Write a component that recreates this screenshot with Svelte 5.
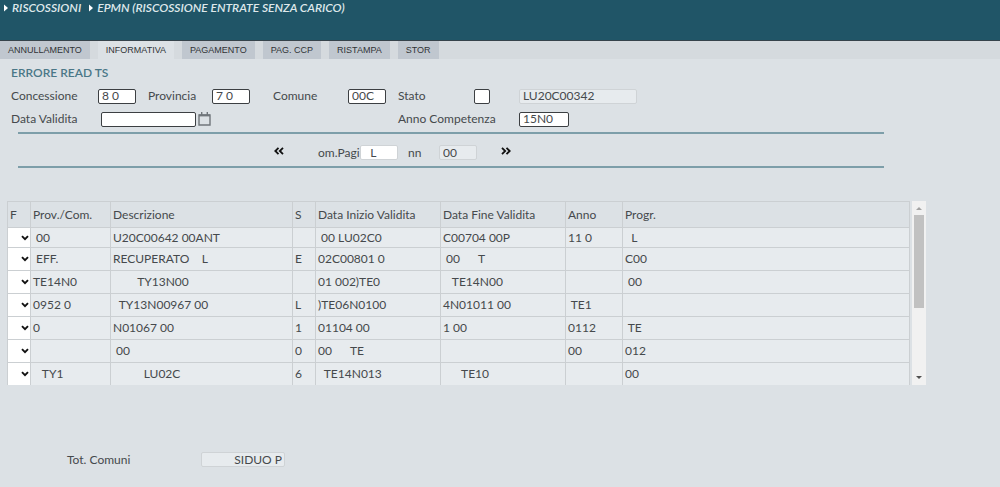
<script>
  const tabs = ['ANNULLAMENTO', 'INFORMATIVA', 'PAGAMENTO', 'PAG. CCP', 'RISTAMPA', 'STOR'];
  let active = $state('INFORMATIVA');

  const columns = ['F', 'Prov./Com.', 'Descrizione', 'S', 'Data Inizio Validita', 'Data Fine Validita', 'Anno', 'Progr.'];
  const rows = [
    [' 00', 'U20C00642 00ANT', '', ' 00 LU02C0', 'C00704 00P', '11 0', '  L'],
    [' EFF.', 'RECUPERATO    L', 'E', '02C00801 0', ' 00      T', '', 'C00'],
    ['TE14N0', '        TY13N00', '', '01 002)TE0', '   TE14N00', '', ' 00'],
    ['0952 0', '  TY13N00967 00', 'L', ')TE06N0100', '4N01011 00', ' TE1', ''],
    ['0', 'N01067 00', '1', '01104 00', '1 00', '0112', ' TE'],
    ['', ' 00', '0', '00      TE', '', '00', '012'],
    ['   TY1', '          LU02C', '6', '  TE14N013', '      TE10', '', '00']
  ];
</script>

<header>
  <nav aria-label="Percorso">
    <a href="#riscossioni"><svg width="4" height="8" viewBox="0 0 4 8"><path d="M0 0.5L4 4L0 7.5Z" /></svg>RISCOSSIONI</a>
    <a href="#epmn"><svg width="4" height="8" viewBox="0 0 4 8"><path d="M0 0.5L4 4L0 7.5Z" /></svg>EPMN (RISCOSSIONE ENTRATE SENZA CARICO)</a>
  </nav>
</header>

<div class="tabs" role="tablist">
  {#each tabs as tab}
    <button role="tab" class:active={tab === active} aria-selected={tab === active} onclick={() => (active = tab)}>{tab}</button>
  {/each}
</div>

<main>
  <h1>ERRORE READ TS</h1>

  <form class="filters">
    <label for="conc">Concessione</label>
    <input id="conc" class="w38" value="8 0" />
    <label for="prov">Provincia</label>
    <input id="prov" class="w38" value="7 0" />
    <label for="com">Comune</label>
    <input id="com" class="w38" value="00C" />
    <label for="stato">Stato</label>
    <input id="stato" class="w16" value="" />
    <input class="w118" aria-label="Descrizione stato" value="LU20C00342" readonly />

    <label for="data">Data Validita</label>
    <div class="date">
      <input id="data" value="" />
      <button type="button" aria-label="Calendario">
        <svg width="13" height="14" viewBox="0 0 13 14"><path d="M1 3H12V13H1Z" fill="none" stroke="#70767b" stroke-width="1.4" /><path d="M1 3.4H12" stroke="#70767b" stroke-width="2" /><path d="M3.7 0V3M9.3 0V3" stroke="#70767b" stroke-width="1.4" /></svg>
      </button>
    </div>
    <label class="anno" for="anno">Anno Competenza</label>
    <input id="anno" class="w50" value="15N0" />
  </form>

  <section class="pager" aria-label="Pagine">
    <button class="prev" aria-label="Precedente"><svg width="10" height="8" viewBox="0 0 10 8"><path d="M4.5 0.8L1.3 4L4.5 7.2M9 0.8L5.8 4L9 7.2" /></svg></button>
    <label for="pag">om.Pagi</label>
    <input id="pag" class="w38 soft" value="  L" />
    <label class="nn" for="tot">nn</label>
    <input id="tot" class="w38" value="00" readonly />
    <button class="next" aria-label="Successiva"><svg width="10" height="8" viewBox="0 0 10 8"><path d="M1 0.8L4.2 4L1 7.2M5.5 0.8L8.7 4L5.5 7.2" /></svg></button>
  </section>

  <div class="grid">
    <table>
      <colgroup>
        <col class="c1" /><col class="c2" /><col class="c3" /><col class="c4" /><col class="c5" /><col class="c5" /><col class="c7" /><col />
      </colgroup>
      <thead>
        <tr>{#each columns as name}<th>{name}</th>{/each}</tr>
      </thead>
      <tbody>
        {#each rows as row, i}
          <tr>
            <td class="pick">
              <div>
                <select aria-label={'F riga ' + (i + 1)}><option></option></select>
                <svg width="8" height="6" viewBox="0 0 8 6"><path d="M1 1.2L4 4.2L7 1.2" /></svg>
              </div>
            </td>
            {#each row as cell}<td>{cell}</td>{/each}
          </tr>
        {/each}
      </tbody>
    </table>
    <div class="scroll" aria-hidden="true">
      <svg width="6" height="3" viewBox="0 0 6 3"><path d="M0 3L3 0L6 3Z" fill="#a3a3a3" /></svg>
      <div class="track"><div class="thumb"></div></div>
      <svg width="6" height="3" viewBox="0 0 6 3"><path d="M0 0L3 3L6 0Z" fill="#505050" /></svg>
    </div>
  </div>

  <div class="total">
    <label for="totcom">Tot. Comuni</label>
    <input id="totcom" value="SIDUO P" readonly />
  </div>
</main>

<style>
  :global(body) {
    background: #dce1e5;
    color: #45494c;
    font: 12px/16px Lato, sans-serif;
  }
  * { box-sizing: border-box; }
  svg { display: block; flex: none; }
  button { border: 0; padding: 0; background: none; font: inherit; color: inherit; }

  header {
    height: 41px;
    padding-left: 4px;
    background: #205567;
    border-bottom: 1px solid #36434b;
  }
  nav { display: flex; gap: 8px; }
  nav a {
    display: flex;
    align-items: center;
    gap: 4px;
    color: #dfe8eb;
    font-style: italic;
    font-weight: 600;
    text-decoration: none;
    white-space: nowrap;
  }
  nav svg { fill: #fff; }

  .tabs { display: flex; gap: 8px; height: 18px; background: #d5dade; }
  .tabs button {
    padding: 0 8px;
    background: #c0c7cf;
    color: #303336;
    font: 9px/18px "Liberation Sans", Arial, sans-serif;
    white-space: nowrap;
  }
  .tabs button.active { background: #dce1e5; }

  h1 {
    margin: 6px 0 7px 11px;
    color: #4a7787;
    font-size: 12px;
    line-height: 16px;
    font-weight: 600;
  }

  input {
    height: 15px;
    padding: 0 3px 1px;
    border: 1px solid #3c3f42;
    border-radius: 2px;
    background: #fff;
    color: #45494c;
    font: 12px/12px Lato, sans-serif;
    min-width: 0;
    outline: 0;
  }
  input[readonly] { background: #e7ebee; border-color: #cfd3d6; }
  .w16 { width: 16px; }
  .w38 { width: 38px; }
  .w50 { width: 50px; }
  .w118 { width: 118px; }

  .filters {
    display: grid;
    grid-template-columns: 88px 49px 65px 60px 76px 49px 77px 45px auto;
    grid-auto-rows: 16px;
    row-gap: 7px;
    align-items: center;
    justify-content: start;
    padding-left: 10px;
    white-space: nowrap;
  }
  .filters label { padding-left: 1px; }
  .date { grid-column: 2 / span 5; display: flex; gap: 2px; align-items: center; padding-left: 3px; }
  .date input { width: 95px; }
  .anno { grid-column: 7 / span 2; }

  .pager {
    display: flex;
    align-items: center;
    height: 36px;
    margin: 5px 116px 0 18px;
    padding: 5px 0 0 256px;
    border: solid #7d9ea9;
    border-width: 2px 0;
  }
  .pager svg path { fill: none; stroke: #111; stroke-width: 1.8; }
  .prev { margin: 0 34px 4px 0; }
  .pager label { width: 42px; white-space: nowrap; }
  .pager .nn { width: 31px; margin-left: 10px; }
  .pager .soft { border-color: #cfd3d6; }
  .next { margin: 0 0 4px 24px; }

  .grid { display: flex; gap: 2px; margin: 33px 74px 0 7px; }
  table {
    flex: 1;
    table-layout: fixed;
    border-collapse: collapse;
    width: 100%;
  }
  .c1 { width: 23px; }
  .c2 { width: 80px; }
  .c3 { width: 182px; }
  .c4 { width: 23px; }
  .c5 { width: 125px; }
  .c7 { width: 57px; }
  th, td {
    height: 23px;
    padding: 0 0 0 2px;
    border: 1px solid #cbcfd2;
    background: #e7ebee;
    text-align: left;
    font-weight: 400;
    white-space: pre;
  }
  th { height: 26px; background: #dce1e5; }
  tbody tr:first-child td { height: 20px; }
  tbody tr:last-child td { height: 22px; border-bottom: 0; }
  td.pick { padding: 0; background: #fff; }
  .pick div { display: grid; align-items: center; }
  .pick select, .pick svg { grid-area: 1 / 1; }
  .pick select { appearance: none; width: 100%; height: 16px; border: 0; padding: 0; background: none; }
  .pick svg { justify-self: end; margin-right: 1px; pointer-events: none; }
  .pick path { fill: none; stroke: #111; stroke-width: 1.9; }

  .scroll {
    display: flex;
    flex-direction: column;
    align-items: center;
    gap: 5px;
    width: 14px;
    padding: 6px 0;
    background: #f1f1f1;
  }
  .track { flex: 1; width: 10px; }
  .thumb { height: 60%; background: #c1c1c1; }

  .total { display: flex; align-items: center; margin: 67px 0 0 67px; }
  .total label { width: 134px; }
  .total input { width: 84px; padding-right: 2px; text-align: right; }
</style>
